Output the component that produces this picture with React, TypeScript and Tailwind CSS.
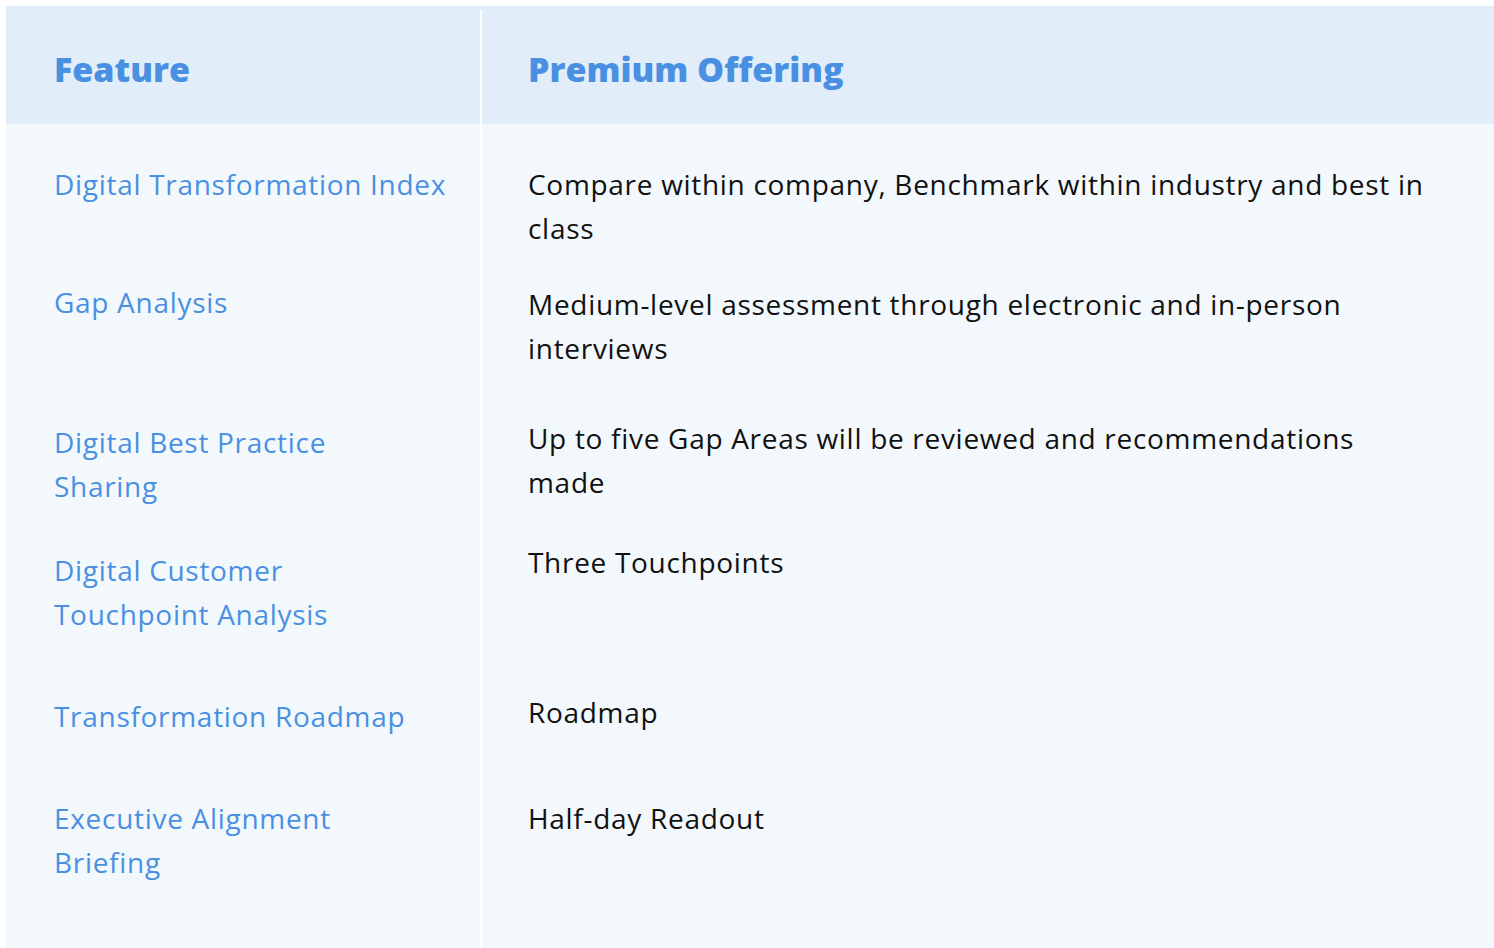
const rows = [
  { feature: ['Digital Transformation Index'], offering: ['Compare within company, Benchmark within industry and best in', 'class'], h: 'h-[136px]', lp: 'pt-[38px]', rp: 'pt-[38px]' },
  { feature: ['Gap Analysis'], offering: ['Medium-level assessment through electronic and in-person', 'interviews'], h: 'h-[136px]', lp: 'pt-[20px]', rp: 'pt-[22px]' },
  { feature: ['Digital Best Practice', 'Sharing'], offering: ['Up to five Gap Areas will be reviewed and recommendations', 'made'], h: 'h-[132px]', lp: 'pt-[24px]', rp: 'pt-[20px]' },
  { feature: ['Digital Customer', 'Touchpoint Analysis'], offering: ['Three Touchpoints'], h: 'h-[144px]', lp: 'pt-[20px]', rp: 'pt-[12px]' },
  { feature: ['Transformation Roadmap'], offering: ['Roadmap'], h: 'h-[104px]', lp: 'pt-[22px]', rp: 'pt-[18px]' },
  { feature: ['Executive Alignment', 'Briefing'], offering: ['Half-day Readout'], h: 'h-[172px]', lp: 'pt-[20px]', rp: 'pt-[20px]' },
];

export default function App() {
  return (
    <div className="h-[948px] w-[1494px] overflow-hidden bg-white pl-1.5 pt-1.5 font-['Open_Sans',sans-serif]">
      <div className="flex h-full flex-col">
        {/* header */}
        <div className="flex h-[118px] bg-[#e1edf8] text-[34px] font-extrabold text-[#4a90e2]">
          <div className="flex w-[474px] shrink-0 items-center pl-12 pt-2">Feature</div>
          <div className="mt-1 flex flex-1 items-center border-l-2 border-white pl-[46px] pt-1">Premium Offering</div>
        </div>

        {/* body */}
        <div className="flex flex-1 flex-col bg-[#f3f8fc] text-[28px] leading-[44px] tracking-[0.7px]">
          {rows.map((r, i) => (
            <div key={i} className={`flex ${i === rows.length - 1 ? 'flex-1' : r.h}`}>
              <div className={`w-[474px] shrink-0 pl-12 text-[#4a90e2] ${r.lp}`}>
                {r.feature.map(line => (
                  <div key={line} className="whitespace-nowrap">{line}</div>
                ))}
              </div>
              <div className={`flex-1 border-l-2 border-white pl-[46px] text-[#111111] ${r.rp}`}>
                {r.offering.map(line => (
                  <div key={line} className="whitespace-nowrap">{line}</div>
                ))}
              </div>
            </div>
          ))}
        </div>
      </div>
    </div>
  );
}
